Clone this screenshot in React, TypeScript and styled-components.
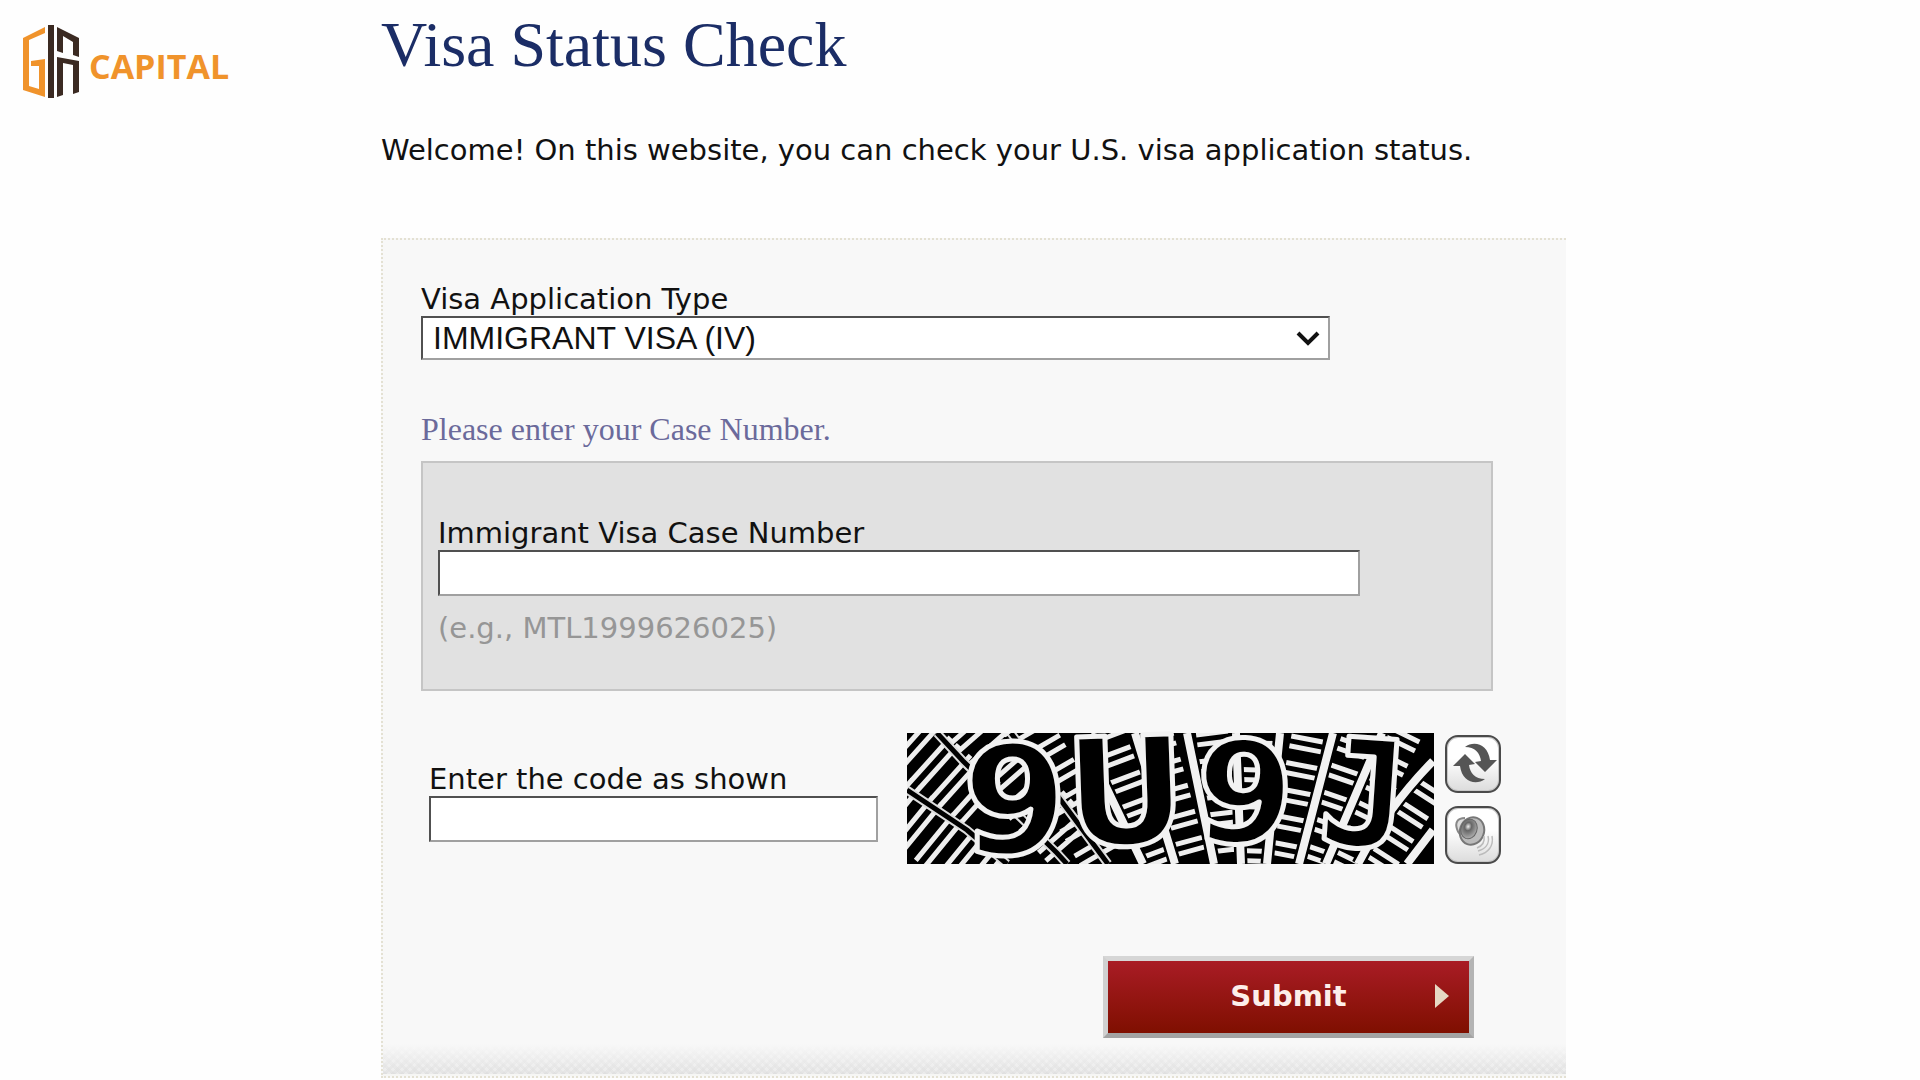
import React, { useState } from 'react';
import styled, { createGlobalStyle } from 'styled-components';

const GlobalStyle = createGlobalStyle`
  *, *::before, *::after { box-sizing: border-box; }
  body {
    margin: 0;
    background: #fefefe;
    color: #111;
    font: 29px/34px Verdana, "DejaVu Sans", sans-serif;
  }
`;

const Page = styled.div`
  display: grid;
  grid-template-columns: 381fr 1185fr 354fr;
  align-items: start;
`;

const Brand = styled.a`
  display: flex;
  align-items: center;
  gap: 9px;
  padding: 24px 0 0 23px;
  color: #f0932b;
  text-decoration: none;
`;

const BrandMark = styled.svg`
  width: 57px;
  height: 76px;
  flex: none;
`;

const BrandName = styled.span`
  padding-top: 8px;
  font: 700 34px/40px "Open Sans", sans-serif;
`;

const Main = styled.main`
  padding-top: 8px;
  min-width: 0;
`;

const Title = styled.h1`
  margin: 0 0 50px;
  color: #1b2d66;
  font: 400 64px/74px "Liberation Serif", serif;
`;

const Intro = styled.p`
  margin: 0 0 70px;
  line-height: 36px;
`;

const Panel = styled.form`
  background: #f8f8f8;
  border: 2px dotted #e4e1d3;
  border-right: 0;
`;

const PanelBody = styled.div`
  display: flex;
  flex-direction: column;
  padding: 42px 65px 6px 38px;
`;

const Field = styled.div<{ $max: number }>`
  display: flex;
  flex-direction: column;
  width: 100%;
  max-width: ${(p) => p.$max}px;
`;

const sunken = `
  width: 100%;
  border: 2px solid;
  border-color: #505050 #a0a0a0 #a0a0a0 #505050;
  border-radius: 0;
  background: #fff;
  color: #111;
  outline: 0;
`;

const TextBox = styled.input`
  ${sunken}
  height: 46px;
  padding: 0 10px;
  font: 32px "Liberation Sans", sans-serif;
`;

const SelectWrap = styled.div`
  position: relative;
`;

const Select = styled.select`
  ${sunken}
  display: block;
  height: 44px;
  padding: 0 48px 0 10px;
  appearance: none;
  font: 32px "Liberation Sans", sans-serif;
`;

const Chevron = styled.svg`
  position: absolute;
  right: 10px;
  top: 14px;
  width: 24px;
  height: 16px;
  pointer-events: none;
`;

const Prompt = styled.p`
  margin: 51px 0 14px;
  color: #6b6a9b;
  font: 32px/36px "Liberation Serif", serif;
`;

const CaseBox = styled.section`
  max-width: 1072px;
  padding: 53px 130px 44px 15px;
  background: #e1e1e1;
  border: 2px solid #c5c5c5;
`;

const Hint = styled.p`
  margin: 15px 0 0;
  color: #969696;
`;

const CodeRow = styled.div`
  display: flex;
  align-items: flex-start;
  margin-top: 42px;
  padding-left: 8px;
`;

const CodeField = styled(Field)`
  flex: 0 1 449px;
  margin: 29px 29px 0 0;
`;

const Captcha = styled.svg`
  display: block;
  flex: none;
  width: 527px;
  height: 131px;
  overflow: visible;
  background: #000;
`;

const CaptchaActions = styled.div`
  display: flex;
  flex-direction: column;
  gap: 13px;
  margin: 2px 0 0 11px;
`;

const IconButton = styled.button`
  display: flex;
  width: 56px;
  height: 58px;
  padding: 0;
  border: 2px solid #4a4a4a;
  border-radius: 13px;
  background: linear-gradient(#fff 40%, #dcdcdc);
  box-shadow: inset 0 0 0 1px #c8c8c8;

  svg { width: 52px; height: 54px; }
`;

const Submit = styled.button`
  display: grid;
  grid-template-columns: 1fr auto 1fr;
  align-items: center;
  align-self: flex-end;
  width: 371px;
  height: 82px;
  margin: 92px 27px 0 0;
  padding: 0 20px 2px;
  border: 5px solid;
  border-color: #d6d6d6 #b4b4b4 #a3a3a3 #d0d0d0;
  background: linear-gradient(#a91c25, #7f0f00);
  color: #fdeeea;
  font: 700 29px/34px Verdana, "DejaVu Sans", sans-serif;

  span { grid-column: 2; }
  svg { justify-self: end; width: 14px; height: 24px; }
`;

const Hatch = styled.div`
  height: 32px;
  border-bottom: 2px solid #f6f6f4;
  background:
    linear-gradient(#f8f8f8, rgba(248, 248, 248, 0)),
    repeating-linear-gradient(45deg, rgba(220, 220, 220, 0.5) 0 3px, transparent 3px 6px),
    repeating-linear-gradient(-45deg, rgba(220, 220, 220, 0.5) 0 3px, transparent 3px 6px),
    #ebebeb;
`;

type Ladder = { from: [number, number]; to: [number, number]; half: number; period: number; gap: number; shift?: number };

const ladders: Ladder[] = [
  { from: [2, 10], to: [82, 82], half: 32, period: 27, gap: 11 },
  { from: [-14, 70], to: [74, 142], half: 30, period: 27, gap: 11 },
  { from: [58, -10], to: [170, 118], half: 30, period: 28, gap: 11, shift: 6 },
  { from: [118, -10], to: [200, 131], half: 24, period: 28, gap: 11 },
  { from: [199, -6], to: [252, 134], half: 16, period: 27, gap: 10 },
  { from: [252, 0], to: [288, 131], half: 14, period: 27, gap: 10, shift: 4 },
  { from: [305, 0], to: [321, 131], half: 16, period: 27, gap: 10 },
  { from: [351, 2], to: [347, 131], half: 15, period: 27, gap: 10, shift: 8 },
  { from: [400, 6], to: [376, 131], half: 16, period: 27, gap: 10 },
  { from: [450, 4], to: [406, 131], half: 15, period: 28, gap: 10, shift: 7 },
  { from: [498, 2], to: [435, 131], half: 16, period: 27, gap: 10 },
  { from: [526, 50], to: [474, 131], half: 15, period: 27, gap: 10, shift: 6 },
];

const rungs = ladders.flatMap(({ from, to, half, period, gap, shift = 0 }) => {
  const dx = to[0] - from[0];
  const dy = to[1] - from[1];
  const len = Math.hypot(dx, dy);
  const ux = dx / len;
  const uy = dy / len;
  const out: string[] = [];
  for (let t = shift; t < len; t += period) {
    for (const d of [t, t + gap]) {
      const x = from[0] + ux * d;
      const y = from[1] + uy * d;
      out.push(`M${x + uy * half} ${y - ux * half}L${x - uy * half} ${y + ux * half}`);
    }
  }
  return out;
}).join('');

const spokes =
  'M228 0L268 131M178 10L236 131M280 0L307 131M329 0L334 131M373 0L360 131M426 0L392 131M475 0L419 131M526 28Q480 75 451 131M526 97L500 131';
const seams = 'M30 0L56 28L150 120L160 131M0 57L60 97L100 131M104 0L201 131';

const glyphs = [
  { char: '9', x: 55, y: 121, size: 152, font: 'DejaVu Sans', turn: 0 },
  { char: 'U', x: 158, y: 112, size: 150, font: 'DejaVu Sans', turn: -2 },
  { char: '9', x: 288, y: 110, size: 142, font: 'DejaVu Sans', turn: 3 },
  { char: 'J', x: 412, y: 114, size: 150, font: 'DejaVu Sans Mono', turn: 4 },
];

function CaptchaPicture() {
  return (
    <Captcha viewBox="0 0 527 131" role="img" aria-label="Verification code">
      <clipPath id="captcha-frame">
        <rect width="527" height="131" />
      </clipPath>
      <g clipPath="url(#captcha-frame)" fill="none">
        <path d={rungs} stroke="#eee" strokeWidth="5" />
        <path d={seams} stroke="#ddd" strokeWidth="9" />
        <path d={seams} stroke="#000" strokeWidth="5" />
        <path d={spokes} stroke="#000" strokeWidth="13" />
        <path d={spokes} stroke="#f2f2f2" strokeWidth="8" />
      </g>
      {glyphs.map((g, i) => (
        <text
          key={i}
          x={g.x}
          y={g.y}
          fontFamily={`"${g.font}", sans-serif`}
          fontWeight={700}
          fontSize={g.size}
          fill="#000"
          stroke="#f2f2f2"
          strokeWidth="5"
          strokeLinejoin="round"
          transform={`rotate(${g.turn} ${g.x + 50} 65)`}
        >
          {g.char}
        </text>
      ))}
    </Captcha>
  );
}

const arrow = 'M20 12C29 5 43 9 45 25L52 25L40 37L30 27L36 26C35 18 30 12 20 12Z';

export default function App() {
  const [caseNumber, setCaseNumber] = useState('');
  const [code, setCode] = useState('');

  return (
    <>
      <GlobalStyle />
      <Page>
        <Brand href="#">
          <BrandMark viewBox="0 0 57 76" aria-hidden="true">
            <path fill="#f0932b" d="M22 3V9L6 16V62L16 65V42H8V37L22 35V73L0 66V14Z" />
            <path fill="#3b2a22" d="M25 1H31V74H25ZM34 3L56 14V33L50 31V18L40 12V29L34 27ZM34 33L56 37V68L50 70V41L40 39V71L34 73Z" />
          </BrandMark>
          <BrandName>CAPITAL</BrandName>
        </Brand>

        <Main>
          <Title>Visa Status Check</Title>
          <Intro>Welcome! On this website, you can check your U.S. visa application status.</Intro>

          <Panel onSubmit={(e) => e.preventDefault()}>
            <PanelBody>
              <Field $max={909}>
                <label htmlFor="visa-type">Visa Application Type</label>
                <SelectWrap>
                  <Select id="visa-type" defaultValue="IV">
                    <option value="IV">IMMIGRANT VISA (IV)</option>
                  </Select>
                  <Chevron viewBox="0 0 24 16" aria-hidden="true">
                    <path d="M2 3L12 13L22 3" fill="none" stroke="#111" strokeWidth="4" />
                  </Chevron>
                </SelectWrap>
              </Field>

              <Prompt>Please enter your Case Number.</Prompt>

              <CaseBox>
                <Field $max={922}>
                  <label htmlFor="case-number">Immigrant Visa Case Number</label>
                  <TextBox id="case-number" value={caseNumber} onChange={(e) => setCaseNumber(e.target.value)} />
                </Field>
                <Hint>(e.g., MTL1999626025)</Hint>
              </CaseBox>

              <CodeRow>
                <CodeField $max={449}>
                  <label htmlFor="code">Enter the code as shown</label>
                  <TextBox id="code" value={code} onChange={(e) => setCode(e.target.value)} />
                </CodeField>
                <CaptchaPicture />
                <CaptchaActions>
                  <IconButton type="button" aria-label="Change the code">
                    <svg viewBox="2 2 52 54">
                      <g fill="#555">
                        <path d={arrow} />
                        <path d={arrow} transform="rotate(180 30 28)" />
                      </g>
                    </svg>
                  </IconButton>
                  <IconButton type="button" aria-label="Speak the code">
                    <svg viewBox="2 2 52 54">
                      <defs>
                        <radialGradient id="cone" cx="0.4" cy="0.4" r="0.6">
                          <stop offset="0" stopColor="#eee" />
                          <stop offset="0.35" stopColor="#666" />
                          <stop offset="1" stopColor="#aaa" />
                        </radialGradient>
                      </defs>
                      <path d="M20 12C12 12 10 17 12 23C13 27 16 29 19 29" fill="#ddd" stroke="#888" strokeWidth="2" />
                      <ellipse cx="27" cy="25" rx="12" ry="14" fill="#bbb" stroke="#777" strokeWidth="2" transform="rotate(20 27 25)" />
                      <ellipse cx="24" cy="23" rx="8" ry="10" fill="url(#cone)" stroke="#666" strokeWidth="1" transform="rotate(20 24 23)" />
                      <path d="M39 30C40 36 37 40 32 42M43 30C45 38 40 43 33 45M47 30C49 40 43 47 34 49" fill="none" stroke="#bbb" strokeWidth="1.5" />
                    </svg>
                  </IconButton>
                </CaptchaActions>
              </CodeRow>

              <Submit type="submit">
                <span>Submit</span>
                <svg viewBox="0 0 14 24" aria-hidden="true">
                  <path d="M0 0L14 12L0 24Z" fill="#e6d8c3" />
                </svg>
              </Submit>
            </PanelBody>
            <Hatch />
          </Panel>
        </Main>
      </Page>
    </>
  );
}
